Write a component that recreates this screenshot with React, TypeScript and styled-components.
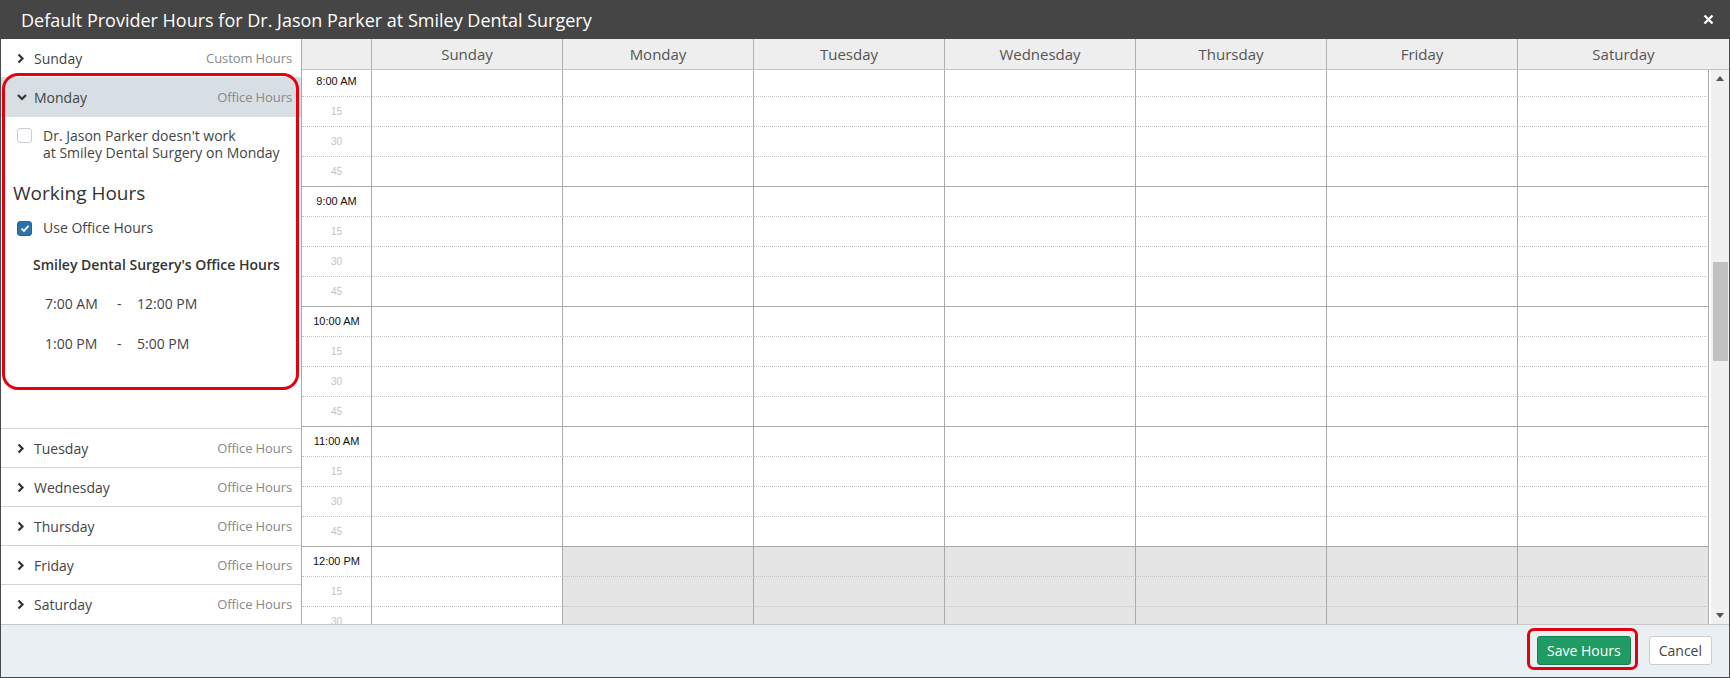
import React from "react";
import styled, { createGlobalStyle } from "styled-components";

const GlobalStyle = createGlobalStyle`
  html, body {
    margin: 0;
    padding: 0;
    background: #fff;
  }
  body {
    font-family: "Open Sans", "Liberation Sans", sans-serif;
    color: #333;
  }
  * {
    box-sizing: border-box;
  }
`;

const Dialog = styled.div`
  width: 1730px;
  height: 678px;
  display: flex;
  flex-direction: column;
  border: 1px solid #4a4a4a;
  border-top: none;
  background: #fff;
`;

const TitleBar = styled.div`
  height: 39px;
  flex: none;
  background: #454545;
  color: #fff;
  display: flex;
  align-items: center;
  justify-content: space-between;
  padding: 0 14px 0 21px;
  margin: 0 -1px;
`;

const Title = styled.h1`
  margin: 0;
  font-size: 18px;
  font-weight: 400;
`;

const CloseButton = styled.button`
  border: none;
  background: none;
  padding: 0;
  width: 16px;
  height: 16px;
  display: flex;
  align-items: center;
  justify-content: center;
  cursor: pointer;
`;

const Main = styled.div`
  height: 585px;
  flex: none;
  display: flex;
`;

const DayList = styled.div`
  width: 301px;
  flex: none;
  border-right: 1px solid #aaa;
  display: flex;
  flex-direction: column;
`;

const DayRow = styled.div<{ $open?: boolean; $divider?: boolean }>`
  height: ${(p) => (p.$open ? 40 : 38)}px;
  flex: none;
  display: flex;
  align-items: center;
  padding: 0 9px 0 16px;
  background: ${(p) => (p.$open ? "#d7dfe5" : "#fff")};
  border-bottom: ${(p) => (p.$divider ? "1px solid #d4d4d4" : "none")};
  box-sizing: content-box;
`;

const Chevron = styled.span`
  width: 10px;
  display: flex;
  align-items: center;
  margin-right: 7px;
`;

const DayName = styled.span`
  font-size: 14px;
  color: #444;
  flex: 1;
`;

const HoursType = styled.span`
  font-size: 13px;
  color: #888;
  letter-spacing: -0.1px;
`;

const MondayBlock = styled.div`
  position: relative;
  flex: none;
`;

const Highlight = styled.div<{ $top: number; $height: number; $radius: number }>`
  position: absolute;
  left: 1px;
  right: 2px;
  top: ${(p) => p.$top}px;
  height: ${(p) => p.$height}px;
  border: 3px solid #e3000f;
  border-radius: ${(p) => p.$radius}px;
  pointer-events: none;
`;

const DayBody = styled.div`
  height: 312px;
  padding: 10px 0 0 0;
  border-bottom: 1px solid #d4d4d4;
`;

const CheckLine = styled.label`
  display: flex;
  align-items: flex-start;
  padding-left: 16px;
  font-size: 14px;
  line-height: 17px;
  color: #444;
`;

const Box = styled.span<{ $checked?: boolean }>`
  width: 15px;
  height: 15px;
  flex: none;
  margin-top: 1px;
  margin-right: 11px;
  border-radius: 3px;
  border: 1px solid ${(p) => (p.$checked ? "#1f679f" : "#c8ced3")};
  background: ${(p) => (p.$checked ? "#2a72ab" : "#fff")};
  display: flex;
  align-items: center;
  justify-content: center;
`;

const SectionTitle = styled.h2`
  margin: 20px 0 0 12px;
  font-size: 19px;
  line-height: 24px;
  font-weight: 400;
  color: #333;
`;

const UseOffice = styled(CheckLine)`
  margin-top: 13px;
  line-height: 20px;
  align-items: center;

  ${Box} {
    margin-top: 0;
  }
`;

const OfficeTitle = styled.div`
  margin: 17px 0 0 32px;
  font-size: 14px;
  line-height: 20px;
  font-weight: 600;
  color: #333;
`;

const TimeRanges = styled.div`
  margin-top: 8px;
  display: grid;
  grid-template-columns: 72px 20px auto;
  grid-auto-rows: 40px;
  align-items: center;
  padding-left: 44px;
  font-size: 14px;
  color: #444;
`;

const Dash = styled.span`
  text-align: left;
`;

const Calendar = styled.div`
  flex: 1;
  min-width: 0;
  display: flex;
  flex-direction: column;
`;

const HeaderRow = styled.div`
  height: 31px;
  flex: none;
  display: grid;
  grid-template-columns: 70px repeat(6, 191px) 1fr;
  background: #eee;
  border-bottom: 1px solid #c4c4c4;
`;

const HeaderCell = styled.div`
  display: flex;
  align-items: center;
  justify-content: center;
  font-size: 15px;
  color: #555;
  border-right: 1px solid #b0b0b0;

  &:last-child {
    border-right: none;
  }
`;

const BodyWrap = styled.div`
  flex: 1;
  display: flex;
  overflow: hidden;
`;

const SlotGrid = styled.div`
  flex: 1;
  overflow: hidden;
`;

const SlotInner = styled.div`
  margin-top: -3px;
  display: grid;
  grid-template-columns: 70px repeat(7, 191px);
  grid-auto-rows: 30px;
`;

const Slot = styled.div<{ $hourEnd: boolean; $closed?: boolean }>`
  border-right: 1px solid #aaa;
  border-bottom: 1px ${(p) => (p.$hourEnd ? "solid #aaa" : "dotted #c4c4c4")};
  background: ${(p) => (p.$closed ? "#e5e5e5" : "#fff")};
`;

const TimeSlot = styled(Slot)<{ $hour: boolean }>`
  display: flex;
  align-items: center;
  justify-content: center;
  font-family: "Liberation Sans", Arial, sans-serif;
  font-size: ${(p) => (p.$hour ? 11 : 10)}px;
  color: ${(p) => (p.$hour ? "#111" : "#c2c2c2")};
  padding-bottom: 1px;
`;

const ScrollTrack = styled.div`
  width: 18px;
  flex: none;
  background: #f0f0f0;
  display: flex;
  flex-direction: column;
  align-items: center;
`;

const ScrollArrow = styled.div`
  height: 17px;
  width: 100%;
  display: flex;
  align-items: center;
  justify-content: center;
`;

const ScrollSpace = styled.div`
  flex: 1;
  width: 100%;
  padding: 175px 1px 0 2px;
`;

const Thumb = styled.div`
  height: 99px;
  background: #c1c1c1;
`;

const Footer = styled.div`
  flex: 1;
  background: #e9eff2;
  border-top: 1px solid #c8c8c8;
  display: flex;
  align-items: center;
  justify-content: flex-end;
  gap: 18px;
  padding: 0 17px 1px 0;
`;

const SaveWrap = styled.div`
  position: relative;
`;

const Button = styled.button<{ $primary?: boolean }>`
  height: 29px;
  padding: 0 ${(p) => (p.$primary ? 9 : 9)}px;
  font-family: "Open Sans", "Liberation Sans", sans-serif;
  font-size: 14px;
  border-radius: 3px;
  cursor: pointer;
  color: ${(p) => (p.$primary ? "#fff" : "#444")};
  background: ${(p) => (p.$primary ? "#1f9b63" : "#fff")};
  border: 1px solid ${(p) => (p.$primary ? "#178152" : "#c9cdd0")};
`;

const SaveHighlight = styled.div`
  position: absolute;
  left: -10px;
  right: -7px;
  top: -8px;
  bottom: -5px;
  border: 3px solid #e3000f;
  border-radius: 7px;
  pointer-events: none;
`;

const days = ["Sunday", "Monday", "Tuesday", "Wednesday", "Thursday", "Friday", "Saturday"];

const listDays = [
  { name: "Tuesday", type: "Office Hours" },
  { name: "Wednesday", type: "Office Hours" },
  { name: "Thursday", type: "Office Hours" },
  { name: "Friday", type: "Office Hours" },
  { name: "Saturday", type: "Office Hours" },
];

const hourLabels = ["8:00 AM", "9:00 AM", "10:00 AM", "11:00 AM", "12:00 PM"];

const ChevronRight = () => (
  <svg width="8" height="11" viewBox="0 0 8 11">
    <path d="M1.5 1.5 L5.5 5.5 L1.5 9.5" fill="none" stroke="#333" strokeWidth="2.2" />
  </svg>
);

const ChevronDown = () => (
  <svg width="10" height="8" viewBox="0 0 10 8">
    <path d="M1 2 L5 6 L9 2" fill="none" stroke="#333" strokeWidth="2.2" />
  </svg>
);

const Tick = () => (
  <svg width="10" height="9" viewBox="0 0 10 9">
    <path d="M1.5 4.6 L4 7 L8.6 1.8" fill="none" stroke="#fff" strokeWidth="1.9" />
  </svg>
);

const SlotRows = () => {
  const rows = [];
  for (let i = 0; i < 19; i++) {
    const hourEnd = i % 4 === 3;
    const label = i % 4 === 0 ? hourLabels[i / 4] : String((i % 4) * 15);
    rows.push(
      <TimeSlot key={`t${i}`} $hour={i % 4 === 0} $hourEnd={hourEnd}>
        {label}
      </TimeSlot>
    );
    days.forEach((d, j) => {
      rows.push(<Slot key={`${d}${i}`} $hourEnd={hourEnd} $closed={j > 0 && i >= 16} />);
    });
  }
  return <>{rows}</>;
};

export default function App() {
  return (
    <>
      <GlobalStyle />
      <Dialog>
        <TitleBar>
          <Title>Default Provider Hours for Dr. Jason Parker at Smiley Dental Surgery</Title>
          <CloseButton aria-label="Close">
            <svg width="11" height="11" viewBox="0 0 11 11">
              <path d="M1.5 1.5 L9.5 9.5 M9.5 1.5 L1.5 9.5" stroke="#fff" strokeWidth="2.4" />
            </svg>
          </CloseButton>
        </TitleBar>

        <Main>
          <DayList>
            <DayRow>
              <Chevron>
                <ChevronRight />
              </Chevron>
              <DayName>Sunday</DayName>
              <HoursType>Custom Hours</HoursType>
            </DayRow>

            <MondayBlock>
              <DayRow $open>
                <Chevron>
                  <ChevronDown />
                </Chevron>
                <DayName>Monday</DayName>
                <HoursType>Office Hours</HoursType>
              </DayRow>
              <DayBody>
                <CheckLine>
                  <Box />
                  <span>
                    Dr. Jason Parker doesn't work
                    <br />
                    at Smiley Dental Surgery on Monday
                  </span>
                </CheckLine>
                <SectionTitle>Working Hours</SectionTitle>
                <UseOffice>
                  <Box $checked>
                    <Tick />
                  </Box>
                  Use Office Hours
                </UseOffice>
                <OfficeTitle>Smiley Dental Surgery's Office Hours</OfficeTitle>
                <TimeRanges>
                  <span>7:00 AM</span>
                  <Dash>-</Dash>
                  <span>12:00 PM</span>
                  <span>1:00 PM</span>
                  <Dash>-</Dash>
                  <span>5:00 PM</span>
                </TimeRanges>
              </DayBody>
              <Highlight $top={-4} $height={317} $radius={16} />
            </MondayBlock>

            {listDays.map((d, i) => (
              <DayRow key={d.name} $divider={i < listDays.length - 1}>
                <Chevron>
                  <ChevronRight />
                </Chevron>
                <DayName>{d.name}</DayName>
                <HoursType>{d.type}</HoursType>
              </DayRow>
            ))}
          </DayList>

          <Calendar>
            <HeaderRow>
              <HeaderCell />
              {days.map((d) => (
                <HeaderCell key={d}>{d}</HeaderCell>
              ))}
            </HeaderRow>
            <BodyWrap>
              <SlotGrid>
                <SlotInner>
                  <SlotRows />
                </SlotInner>
              </SlotGrid>
              <ScrollTrack>
                <ScrollArrow>
                  <svg width="8" height="5" viewBox="0 0 8 5">
                    <path d="M0 5 L4 0 L8 5 Z" fill="#555" />
                  </svg>
                </ScrollArrow>
                <ScrollSpace>
                  <Thumb />
                </ScrollSpace>
                <ScrollArrow>
                  <svg width="8" height="5" viewBox="0 0 8 5">
                    <path d="M0 0 L4 5 L8 0 Z" fill="#555" />
                  </svg>
                </ScrollArrow>
              </ScrollTrack>
            </BodyWrap>
          </Calendar>
        </Main>

        <Footer>
          <SaveWrap>
            <Button $primary>Save Hours</Button>
            <SaveHighlight />
          </SaveWrap>
          <Button>Cancel</Button>
        </Footer>
      </Dialog>
    </>
  );
}
